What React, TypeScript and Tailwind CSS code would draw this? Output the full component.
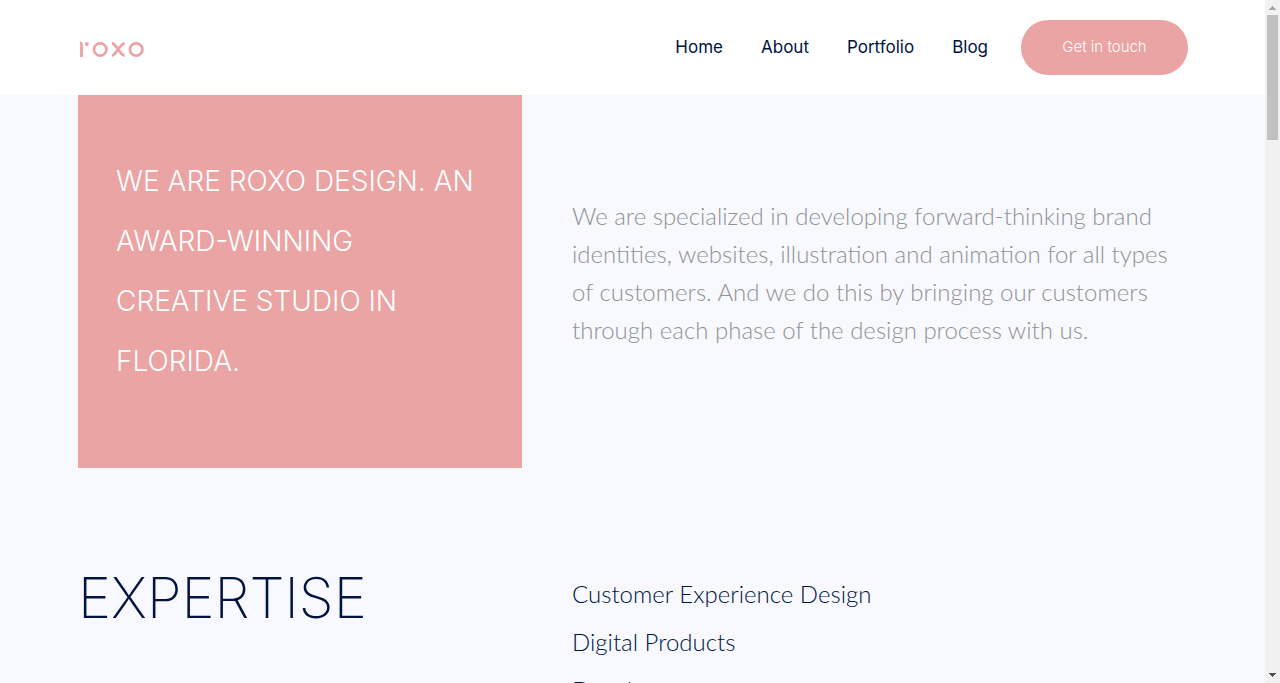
import React from "react";

const navItems = ["Home", "About", "Portfolio", "Blog"];
const services = ["Customer Experience Design", "Digital Products", "Development"];

function Logo() {
  return (
    <svg viewBox="0 0 66 20" className="h-5 w-[66px]" fill="none" stroke="#eaa4a4" strokeWidth="2.8" role="img" aria-label="roxo">
      <path d="M2 4.9C3.2 4.9 3.5 5.6 3.5 6.8V19" />
      <circle cx="8.8" cy="6" r="2" fill="#eaa4a4" stroke="none" />
      <circle cx="22.2" cy="11.5" r="6.2" />
      <path d="M34 5.5C35.5 5.5 36.2 6.5 37.2 7.7L43 15.2C44 16.5 44.8 17.5 46.6 17.6M46.6 5.5C44.8 5.5 44 6.5 43 7.7L37.2 15.2C36.2 16.5 35.5 17.5 34 17.6" />
      <circle cx="58.2" cy="11.5" r="6.2" />
    </svg>
  );
}

function Header() {
  return (
    <header className="bg-white pr-[77px] pl-[78px]">
      <div className="flex h-[95px] items-center justify-between">
        <a href="#home"><Logo /></a>
        <div className="flex items-center gap-[33px]">
          <nav className="flex gap-[38px] text-[17px] text-[#001341]">
            {navItems.map((item) => (
              <a key={item} href={"#" + item.toLowerCase()}>{item}</a>
            ))}
          </nav>
          <button type="button" className="h-[55px] w-[167px] rounded-full bg-[#eaa4a4] text-[15px] font-light text-white">
            Get in touch
          </button>
        </div>
      </div>
    </header>
  );
}

function Scrollbar() {
  return (
    <aside aria-hidden="true" className="flex w-[15px] shrink-0 flex-col bg-[#f1f1f1]">
      <svg viewBox="0 0 15 15" className="h-[15px] w-[15px]" shapeRendering="crispEdges"><path d="M4 10H11L7.5 6Z" fill="#a3a3a3" /></svg>
      <div className="mx-[2px] h-[125px] bg-[#c1c1c1]" />
      <svg viewBox="0 0 15 15" className="mt-auto h-[15px] w-[15px]" shapeRendering="crispEdges"><path d="M4 5H11L7.5 9Z" fill="#505050" /></svg>
    </aside>
  );
}

export default function App() {
  return (
    <div className="flex h-screen overflow-hidden bg-[#f8f9fe] font-['Inter',sans-serif]">
      <div className="min-w-0 flex-1">
        <Header />
        <main className="pr-[77px] pl-[78px]">
          <section className="grid grid-cols-[2fr_3fr]">
            <div className="bg-[#eaa4a4] px-[38px] pt-[56px] pb-[77px]">
              <h2 className="text-[28px] leading-[60px] font-light text-white uppercase">
                We are ROXO Design. An award-winning creative studio in Florida.
              </h2>
            </div>
            <div className="pt-[102px] pl-[50px]">
              <p className="font-['Lato',sans-serif] text-2xl leading-[38px] font-light text-[#8f9195]">
                We are specialized in developing forward-thinking brand identities, websites, illustration and animation for all types of customers. And we do this by bringing our customers through each phase of the design process with us.
              </p>
            </div>
          </section>
          <section className="grid grid-cols-[2fr_3fr] pt-[102px] text-[#001341]">
            <h2 className="text-[56px] leading-[56px] font-extralight uppercase">Expertise</h2>
            <ul className="pl-[50px] font-['Lato',sans-serif] text-2xl leading-[48px] font-light">
              {services.map((service) => <li key={service}>{service}</li>)}
            </ul>
          </section>
        </main>
      </div>
      <Scrollbar />
    </div>
  );
}
